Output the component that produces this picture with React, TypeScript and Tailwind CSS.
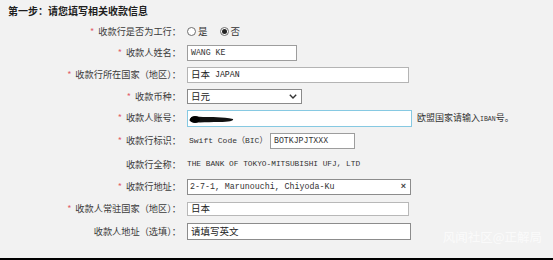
import React from "react";

const CJK = "font-['Noto_Sans_CJK_SC','Noto_Sans',sans-serif]";
const MONO = "font-['Liberation_Mono','Noto_Sans_CJK_SC',monospace]";

function Label({ text, req = true }: { text: string; req?: boolean }) {
  return (
    <div className={`flex items-center justify-end pr-[1px] text-[9.2px] leading-none text-[#3a3a3a] ${CJK}`}>
      {req && <span className="mr-[4px] text-[9px] text-[#e2616b]">*</span>}
      <span>{text}</span>
    </div>
  );
}

function Row({ h, label, req, children }: { h: string; label: string; req?: boolean; children?: React.ReactNode }) {
  return (
    <div className={`grid grid-cols-[182px_1fr] items-center ${h}`}>
      <Label text={label} req={req} />
      <div className="flex items-center pl-[5px]">{children}</div>
    </div>
  );
}

function Radio({ checked, text }: { checked?: boolean; text: string }) {
  return (
    <span className="mr-[12px] flex items-center">
      <span className="mr-[2px] flex h-[9px] w-[9px] items-center justify-center rounded-full border border-[#6e6e6e] bg-white">
        {checked && <span className="h-[5px] w-[5px] rounded-full bg-[#222]" />}
      </span>
      <span className={`text-[9.5px] leading-none text-[#333] ${CJK}`}>{text}</span>
    </span>
  );
}

export default function App() {
  return (
    <div className="relative flex h-[260px] w-[553px] flex-col overflow-hidden bg-[#f2f2f2]">
      <div className={`flex h-[21px] items-center pl-[8px] text-[10px] font-bold leading-none text-[#1e1e1e] ${CJK}`}>
        第一步：请您填写相关收款信息
      </div>

      <Row h="h-[21px]" label="收款行是否为工行：">
        <Radio text="是" />
        <Radio checked text="否" />
      </Row>

      <Row h="h-[22px]" label="收款人姓名：">
        <div className={`flex h-[16px] w-[110px] shrink-0 items-center border border-[#9d9d9d] bg-white pl-[3px] text-[8.2px] text-[#333] ${MONO}`}>
          WANG KE
        </div>
      </Row>

      <Row h="h-[22px]" label="收款行所在国家（地区）：">
        <div className="flex h-[16px] w-[222px] shrink-0 items-center border border-[#b4b4b4] bg-white pl-[3px] text-[#222]">
          <span className={`text-[9.5px] leading-none ${CJK}`}>日本</span>
          <span className={`ml-[5px] text-[8.2px] leading-none ${MONO}`}>JAPAN</span>
        </div>
      </Row>

      <Row h="h-[21px]" label="收款币种：">
        <div className={`flex h-[15px] w-[115px] shrink-0 items-center justify-between border border-[#8a8a8a] bg-white pl-[3px] pr-[4px] text-[9.5px] text-[#222] ${CJK}`}>
          <span>日元</span>
          <svg width="8" height="5" viewBox="0 0 8 5">
            <path d="M0.8 0.8 L4 4 L7.2 0.8" fill="none" stroke="#333" strokeWidth="1.4" />
          </svg>
        </div>
      </Row>

      <Row h="h-[22px]" label="收款人账号：">
        <div className="relative h-[17px] w-[225px] shrink-0 border border-[#86c9e2] bg-white">
          <svg className="absolute left-[1px] top-[4px]" width="46" height="9" viewBox="0 0 46 9">
            <path d="M1 4 C2 1 8 1 14 2 C22 2 34 2 44 4 C45 6 40 7 30 7 C20 7 10 8 3 7 C0 6 0 5 1 4 Z" fill="#111" />
            <ellipse cx="6" cy="4.5" rx="5" ry="3.5" fill="#000" />
          </svg>
        </div>
        <span className={`ml-[5px] text-[9px] leading-none text-[#333] ${CJK}`}>
          欧盟国家请输入<span className={`text-[6.5px] ${MONO}`}>IBAN</span>号。
        </span>
      </Row>

      <Row h="h-[24px]" label="收款行标识：">
        <div className="grid grid-cols-[83px_85px] items-center">
          <span className={`whitespace-nowrap pl-[2px] text-[8px] leading-none text-[#333] ${MONO}`}>Swift Code（BIC）</span>
          <div className={`flex h-[16px] items-center border border-[#9d9d9d] bg-white pl-[3px] text-[8.2px] text-[#333] ${MONO}`}>
            BOTKJPJTXXX
          </div>
        </div>
      </Row>

      <Row h="h-[23px]" label="收款行全称：" req={false}>
        <span className={`text-[7.8px] leading-none text-[#333] ${MONO}`}>THE BANK OF TOKYO-MITSUBISHI UFJ, LTD</span>
      </Row>

      <Row h="h-[22px]" label="收款行地址：">
        <div className={`flex h-[16px] w-[224px] shrink-0 items-center justify-between border border-[#8c8c8c] bg-white pl-[2px] pr-[4px] text-[8.3px] text-[#333] ${MONO}`}>
          <span>2-7-1, Marunouchi, Chiyoda-Ku</span>
          <span className="font-['Liberation_Sans',sans-serif] text-[9px] font-bold text-[#444]">×</span>
        </div>
      </Row>

      <Row h="h-[21px]" label="收款人常驻国家（地区）：">
        <div className={`flex h-[14px] w-[222px] shrink-0 items-center border border-[#b8b8b8] bg-white pl-[3px] text-[9.5px] text-[#222] ${CJK}`}>
          日本
        </div>
      </Row>

      <Row h="h-[25px]" label="收款人地址（选填）：" req={false}>
        <div className={`flex h-[17px] w-[224px] shrink-0 items-center border border-[#8c8c8c] bg-white pl-[3px] text-[9.5px] text-[#222] ${CJK}`}>
          请填写英文
        </div>
      </Row>

      <div className={`absolute right-[11px] top-[231px] text-[12.5px] leading-none text-white/70 ${CJK}`}>
        风闻社区@正解局
      </div>
      <div className="absolute bottom-0 left-0 h-[2px] w-full bg-black" />
    </div>
  );
}
